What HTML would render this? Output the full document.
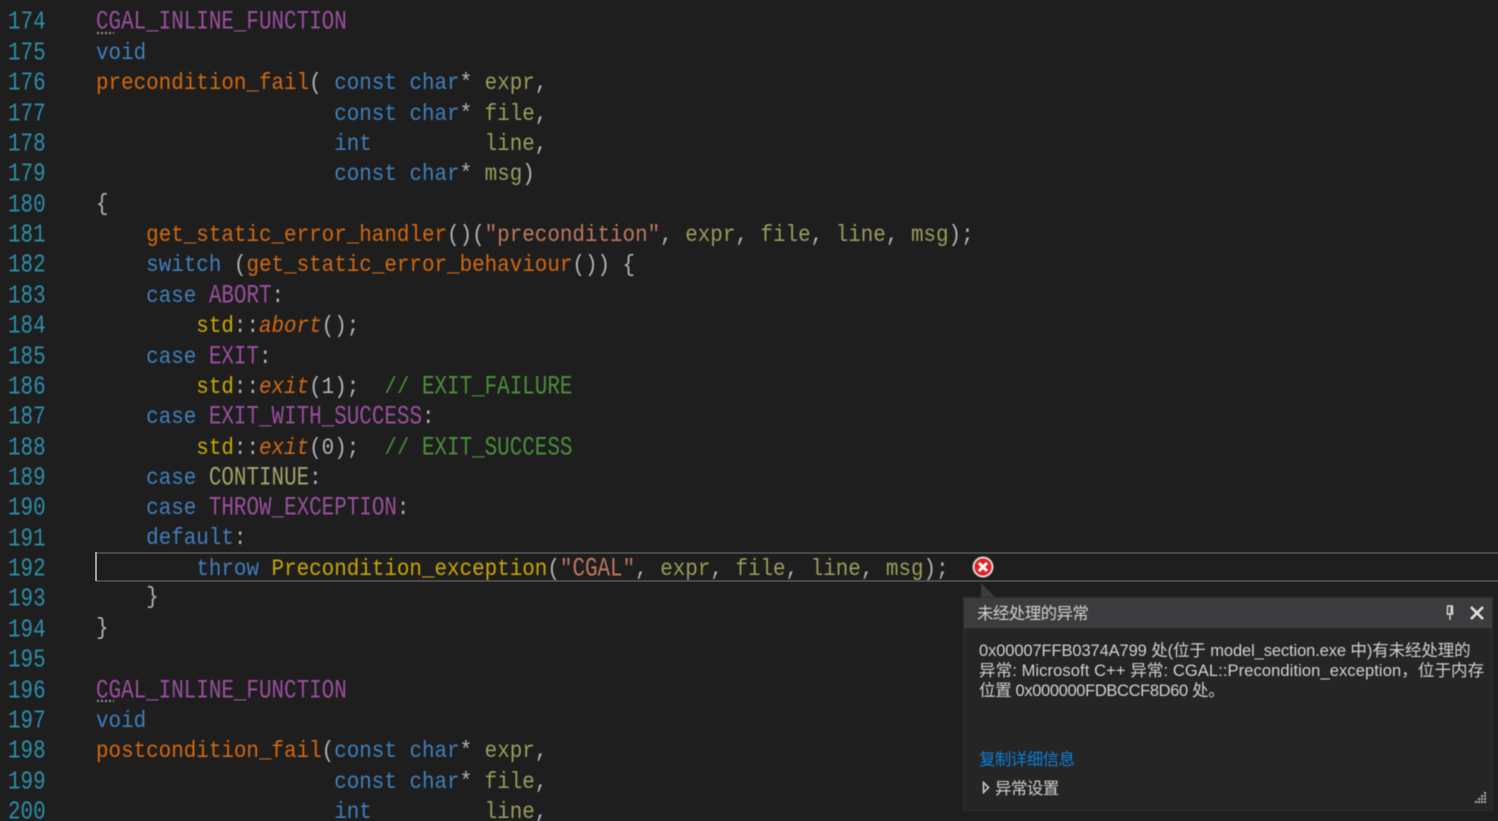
<!DOCTYPE html>
<html lang="zh">
<head>
<meta charset="utf-8">
<title>Code Editor</title>
<style>
html,body{margin:0;padding:0;background:#1e1e1e;}
#p{position:relative;width:1498px;height:821px;overflow:hidden;background:#1e1e1e;}
#code{position:absolute;left:0;top:1px;width:1498px;height:821px;filter:blur(.55px);}
.l{position:absolute;left:96px;height:30px;line-height:30px;white-space:pre;font-family:"Liberation Mono",monospace;font-size:20.9px;color:#b4b4b4;transform:scaleY(1.12);transform-origin:0 20.6px;}
.n{left:8px;color:#2b8fa8;transform:translateY(1px) scaleY(1.25);}
.k{color:#3f80bd}.m{color:#9a4f9f}.f{color:#d2690f}.a{color:#9a9c5c}.s{color:#bd7a5e}.c{color:#4a8f3a}.y{color:#c8a800}.e{color:#a3a36a}.p{color:#a8a8a8}
.u{display:inline-block;transform:translateY(1px) scaleY(1.14);transform-origin:0 20.6px;}
i{font-style:italic}
.box{position:absolute;left:96px;top:552px;width:1402px;height:26px;border-top:2px solid #484848;border-bottom:2px solid #484848;}
.bl{position:absolute;left:95px;top:552px;width:2px;height:29px;background:#a0a0a0;}
.dots{position:absolute;left:97px;width:17px;height:2px;background-image:linear-gradient(90deg,#999 50%,transparent 50%);background-size:4px 2px;}
#pop{position:absolute;left:964px;top:598px;width:528px;height:212px;background:#252526;box-shadow:0 0 0 1px #2d2d30;filter:blur(.45px);font-family:"Liberation Sans","Noto Sans CJK SC",sans-serif;color:#d0d0d0;}
#hd{position:absolute;left:0;top:0;width:528px;height:30px;background:#3c3c3f;}
.t{position:absolute;white-space:pre;font-size:16.5px;line-height:20px;letter-spacing:-.6px;}
</style>
</head>
<body>
<div id="p">
<div class="box"></div><div class="bl"></div>
<div id="code">
<div class="l n" style="top:8.4px">174</div>
<div class="l n" style="top:38.8px">175</div>
<div class="l n" style="top:69.1px">176</div>
<div class="l n" style="top:99.5px">177</div>
<div class="l n" style="top:129.9px">178</div>
<div class="l n" style="top:160.2px">179</div>
<div class="l n" style="top:190.6px">180</div>
<div class="l n" style="top:221px">181</div>
<div class="l n" style="top:251.4px">182</div>
<div class="l n" style="top:281.7px">183</div>
<div class="l n" style="top:312.1px">184</div>
<div class="l n" style="top:342.5px">185</div>
<div class="l n" style="top:372.8px">186</div>
<div class="l n" style="top:403.2px">187</div>
<div class="l n" style="top:433.6px">188</div>
<div class="l n" style="top:463.9px">189</div>
<div class="l n" style="top:494.3px">190</div>
<div class="l n" style="top:524.7px">191</div>
<div class="l n" style="top:555px">192</div>
<div class="l n" style="top:585.4px">193</div>
<div class="l n" style="top:615.8px">194</div>
<div class="l n" style="top:646.2px">195</div>
<div class="l n" style="top:676.5px">196</div>
<div class="l n" style="top:706.9px">197</div>
<div class="l n" style="top:737.3px">198</div>
<div class="l n" style="top:767.6px">199</div>
<div class="l n" style="top:798px">200</div>

<div class="l" style="top:8.4px"><span class="m u">CGAL_INLINE_FUNCTION</span></div>
<div class="dots" style="top:31px"></div>
<div class="l" style="top:38.8px"><span class="k">void</span></div>
<div class="l" style="top:69.1px"><span class="f">precondition_fail</span>( <span class="k">const</span> <span class="k">char</span>* <span class="a">expr</span>,</div>
<div class="l" style="top:99.5px">                   <span class="k">const</span> <span class="k">char</span>* <span class="a">file</span>,</div>
<div class="l" style="top:129.9px">                   <span class="k">int</span>         <span class="a">line</span>,</div>
<div class="l" style="top:160.2px">                   <span class="k">const</span> <span class="k">char</span>* <span class="a">msg</span>)</div>
<div class="l" style="top:189.6px">{</div>
<div class="l" style="top:221px">    <span class="f">get_static_error_handler</span>()(<span class="s">"precondition"</span>, <span class="a">expr</span>, <span class="a">file</span>, <span class="a">line</span>, <span class="a">msg</span>);</div>
<div class="l" style="top:251.4px">    <span class="k">switch</span> (<span class="f">get_static_error_behaviour</span>()) {</div>
<div class="l" style="top:281.7px">    <span class="k">case</span> <span class="m u">ABORT</span>:</div>
<div class="l" style="top:312.1px">        <span class="y">std</span>::<i class="f">abort</i>();</div>
<div class="l" style="top:342.5px">    <span class="k">case</span> <span class="m u">EXIT</span>:</div>
<div class="l" style="top:372.8px">        <span class="y">std</span>::<i class="f">exit</i>(1);  <span class="c">// <span class="u">EXIT_FAILURE</span></span></div>
<div class="l" style="top:403.2px">    <span class="k">case</span> <span class="m u">EXIT_WITH_SUCCESS</span>:</div>
<div class="l" style="top:433.6px">        <span class="y">std</span>::<i class="f">exit</i>(0);  <span class="c">// <span class="u">EXIT_SUCCESS</span></span></div>
<div class="l" style="top:463.9px">    <span class="k">case</span> <span class="e u">CONTINUE</span>:</div>
<div class="l" style="top:494.3px">    <span class="k">case</span> <span class="m u">THROW_EXCEPTION</span>:</div>
<div class="l" style="top:523.7px">    <span class="k">default</span>:</div>
<div class="l" style="top:555px">        <span class="k">throw</span> <span class="y">Precondition_exception</span>(<span class="s">"<span class="u">CGAL</span>"</span>, <span class="a">expr</span>, <span class="a">file</span>, <span class="a">line</span>, <span class="a">msg</span>);</div>
<div class="l" style="top:583.4px">    }</div>
<div class="l" style="top:613.8px">}</div>
<div class="l" style="top:676.5px"><span class="m u">CGAL_INLINE_FUNCTION</span></div>
<div class="dots" style="top:699px"></div>
<div class="l" style="top:706.9px"><span class="k">void</span></div>
<div class="l" style="top:737.3px"><span class="f">postcondition_fail</span>(<span class="k">const</span> <span class="k">char</span>* <span class="a">expr</span>,</div>
<div class="l" style="top:767.6px">                   <span class="k">const</span> <span class="k">char</span>* <span class="a">file</span>,</div>
<div class="l" style="top:798px">                   <span class="k">int</span>         <span class="a">line</span>,</div>
</div>

<svg style="position:absolute;left:968px;top:553px;filter:blur(.4px)" width="34" height="46" viewBox="0 0 34 46">
<path d="M13 30 L13 45 L28 45 Z" fill="#3c3c3f"/>
<circle cx="15" cy="14" r="10.5" fill="#d8d8d8"/>
<circle cx="15" cy="14" r="8.5" fill="#e21f26"/>
<path d="M11 10 L19 18 M19 10 L11 18" stroke="#fff" stroke-width="3" fill="none"/>
</svg>

<div id="pop">
<div id="hd"></div>
<div class="t" style="left:13px;top:6px">未经处理的异常</div>
<svg style="position:absolute;left:480px;top:7px" width="12" height="16" viewBox="0 0 12 16"><path d="M3 1 H9 M3.5 1 V9 H8.5 V1 M2.5 9 H9.5 M6 9 V15" stroke="#d8d8d8" stroke-width="1.4" fill="none"/><rect x="6.5" y="2" width="2" height="6" fill="#d8d8d8"/></svg>
<svg style="position:absolute;left:505px;top:7px" width="16" height="16" viewBox="0 0 16 16"><path d="M2 2 L14 14 M14 2 L2 14" stroke="#e4e4e4" stroke-width="2.6" fill="none"/></svg>
<div class="t" style="left:15px;top:43px;letter-spacing:-.11px">0x00007FFB0374A799 处(位于 model_section.exe 中)有未经处理的</div>
<div class="t" style="left:15px;top:63px;letter-spacing:.1px">异常: Microsoft C++ 异常: CGAL::Precondition_exception，位于内存</div>
<div class="t" style="left:15px;top:83px;letter-spacing:-.36px">位置 0x000000FDBCCF8D60 处。</div>
<div class="t" style="left:15px;top:152px;color:#0e7fd6">复制详细信息</div>
<svg style="position:absolute;left:18px;top:183px" width="8" height="13" viewBox="0 0 8 13"><path d="M1.5 1.5 L6.5 6.5 L1.5 11.5 Z" fill="#252526" stroke="#d0d0d0" stroke-width="1.5"/></svg>
<div class="t" style="left:31px;top:181px">异常设置</div>
<svg style="position:absolute;left:509px;top:193px" width="16" height="14" viewBox="0 0 16 14" fill="#b0b0b0"><rect x="11" y="1" width="2" height="2"/><rect x="8" y="4" width="2" height="2"/><rect x="11" y="4" width="2" height="2"/><rect x="5" y="7" width="2" height="2"/><rect x="8" y="7" width="2" height="2"/><rect x="11" y="7" width="2" height="2"/><rect x="2" y="10" width="2" height="2"/><rect x="5" y="10" width="2" height="2"/><rect x="8" y="10" width="2" height="2"/><rect x="11" y="10" width="2" height="2"/></svg>
</div>
</div>
</body>
</html>
